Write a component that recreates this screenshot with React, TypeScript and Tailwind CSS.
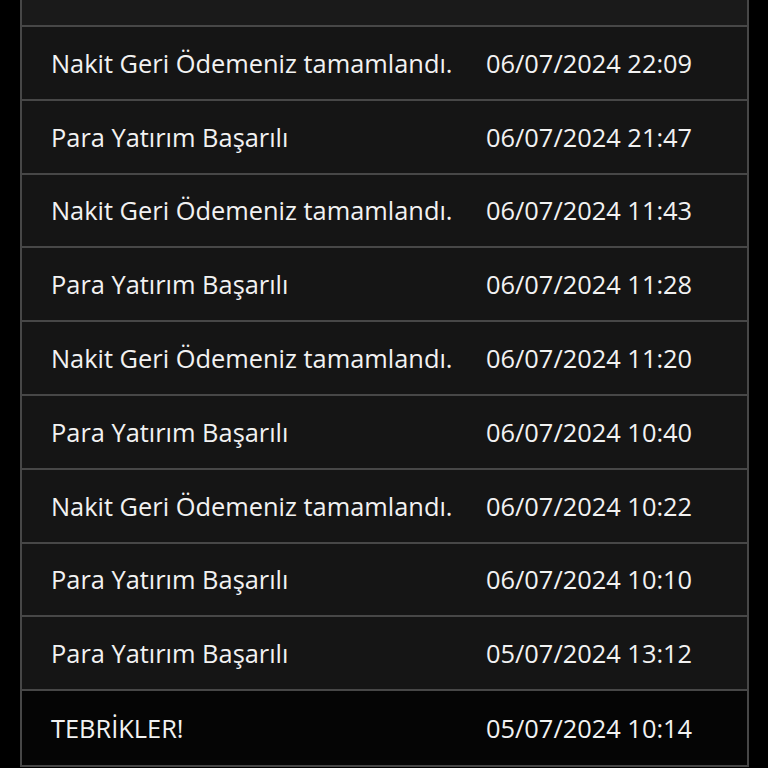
import React from "react";

type Item = { title: string; date: string; highlight?: boolean };

const items: Item[] = [
  { title: "Nakit Geri Ödemeniz tamamlandı.", date: "06/07/2024 22:09" },
  { title: "Para Yatırım Başarılı", date: "06/07/2024 21:47" },
  { title: "Nakit Geri Ödemeniz tamamlandı.", date: "06/07/2024 11:43" },
  { title: "Para Yatırım Başarılı", date: "06/07/2024 11:28" },
  { title: "Nakit Geri Ödemeniz tamamlandı.", date: "06/07/2024 11:20" },
  { title: "Para Yatırım Başarılı", date: "06/07/2024 10:40" },
  { title: "Nakit Geri Ödemeniz tamamlandı.", date: "06/07/2024 10:22" },
  { title: "Para Yatırım Başarılı", date: "06/07/2024 10:10" },
  { title: "Para Yatırım Başarılı", date: "05/07/2024 13:12" },
  { title: "TEBRİKLER!", date: "05/07/2024 10:14", highlight: true },
];

const App: React.FC = () => {
  return (
    <div
      className="min-h-[768px] w-full bg-black pl-[20px] pr-[19px] overflow-hidden"
      style={{ fontFamily: '"Open Sans", "Noto Sans", sans-serif' }}
    >
      <div className="border-x-2 border-b-2 border-[#474747] text-[#f2f2f2] text-[25.4px]">
        {/* partially scrolled row at top */}
        <div className="h-[25px] bg-[#1a1a1a] border-b-2 border-[#474747] box-content" />

        {items.map((item, i) => (
          <div
            key={i}
            className={`grid grid-cols-[434px_1fr] items-center h-[73.8px] ${
              i < items.length - 1 ? "border-b-2 border-[#474747]" : ""
            } ${item.highlight ? "bg-[#050505]" : "bg-[#151515]"}`}
          >
            <div className="pl-[29px] whitespace-nowrap">{item.title}</div>
            <div className="pl-[30px] whitespace-nowrap">{item.date}</div>
          </div>
        ))}
      </div>
    </div>
  );
};

export default App;
